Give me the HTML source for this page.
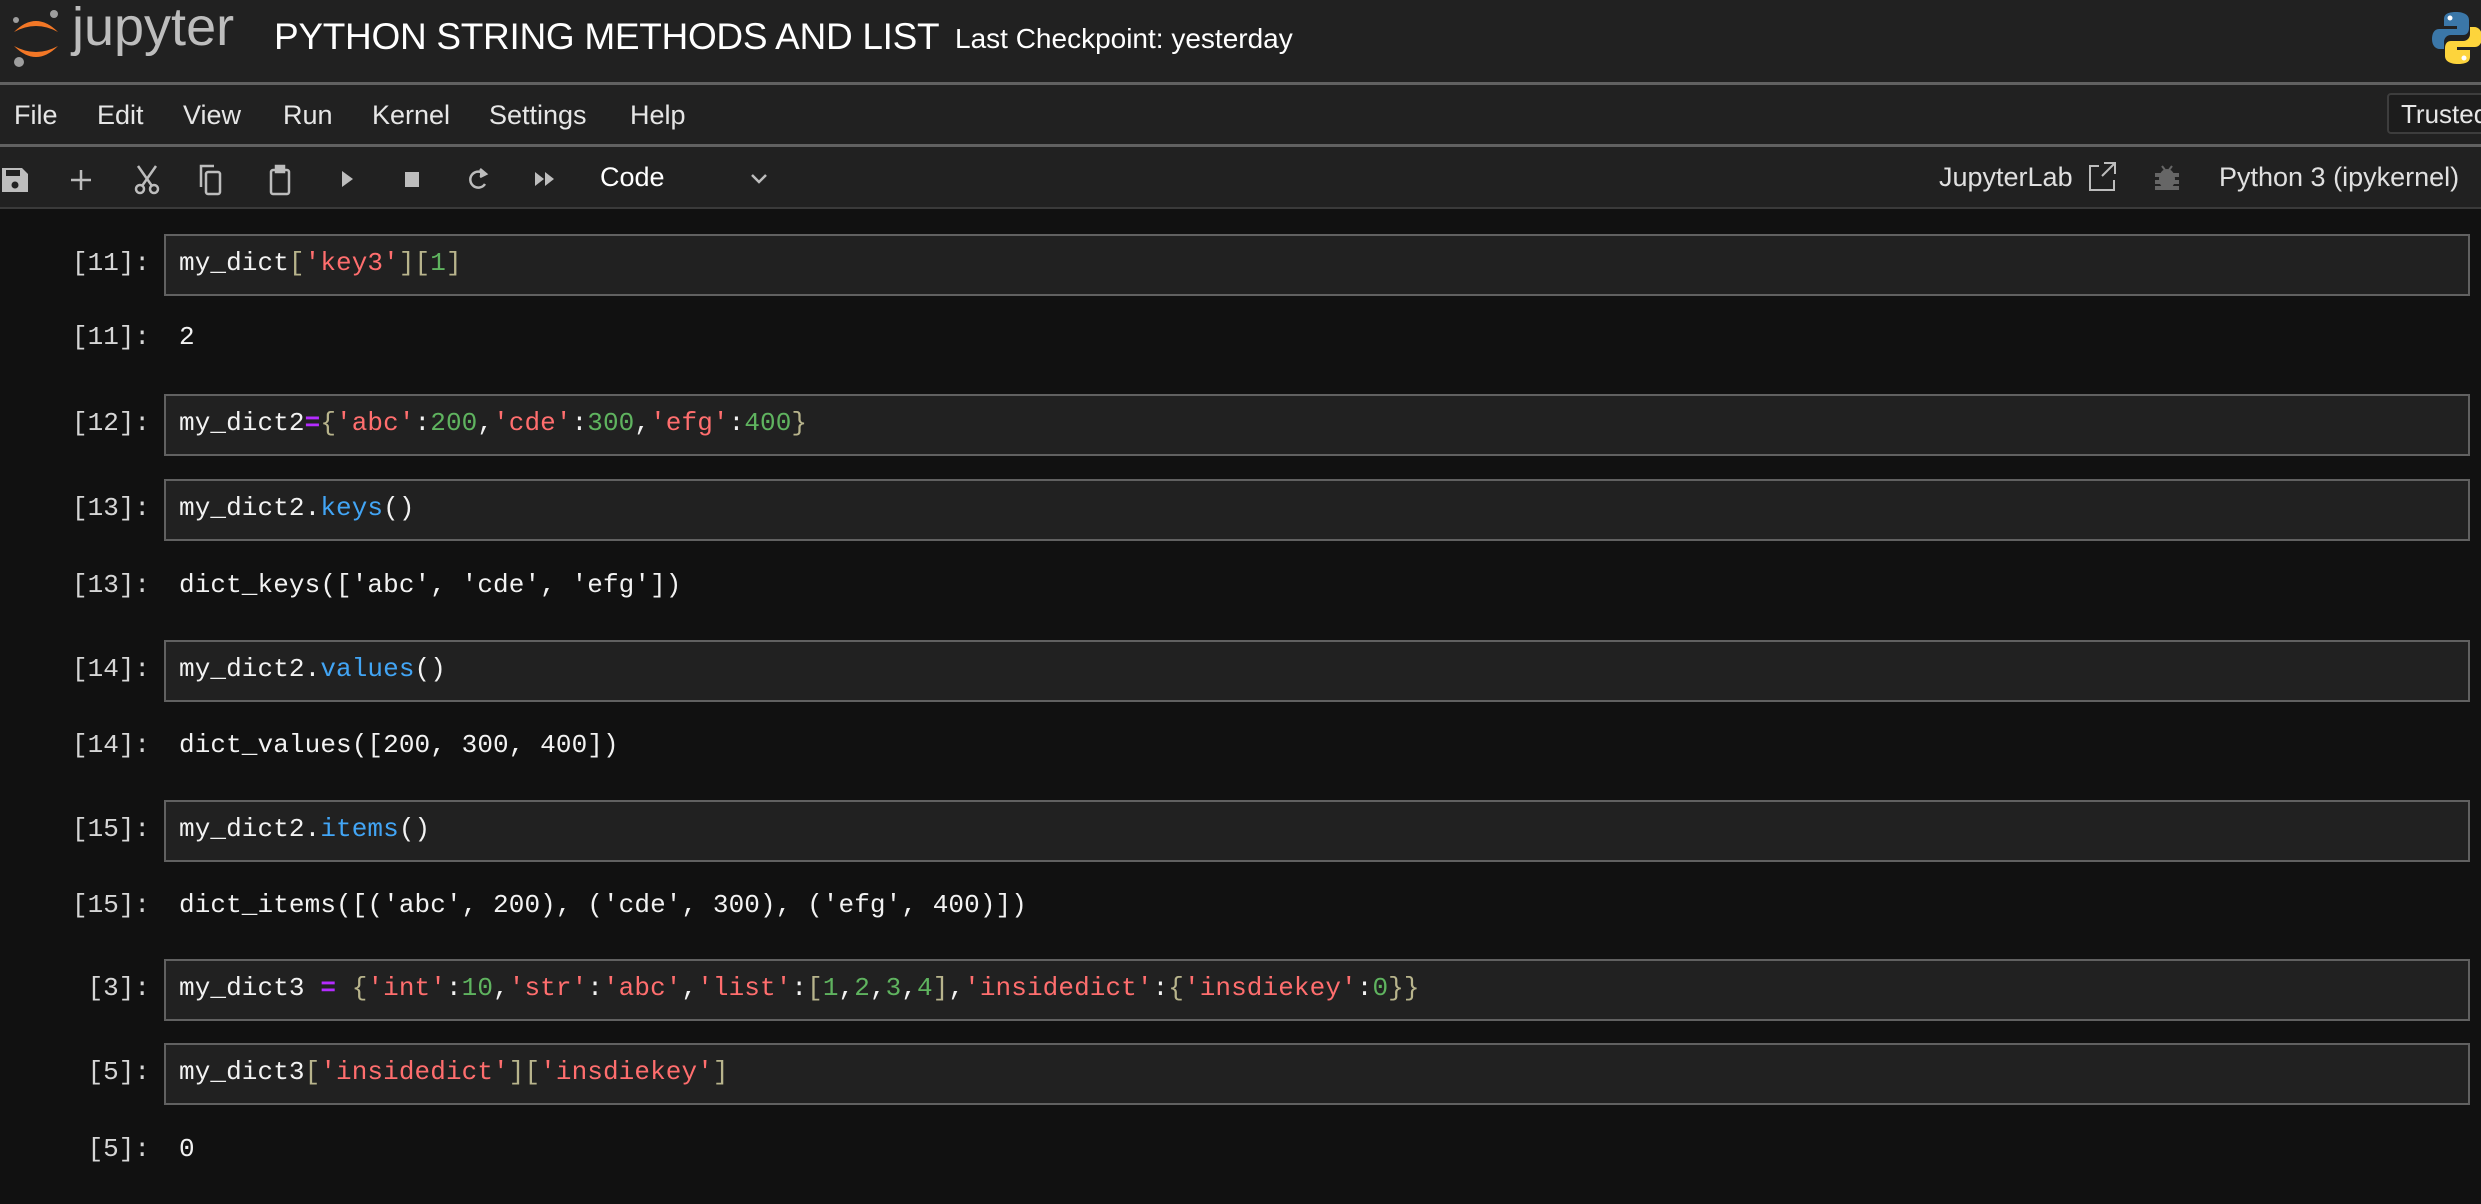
<!DOCTYPE html>
<html><head><meta charset="utf-8"><style>
*{margin:0;padding:0;box-sizing:border-box}
body{width:2481px;height:1204px;background:#111;overflow:hidden;font-family:"Liberation Sans",sans-serif;color:#e8e8e8;position:relative}
.bar{position:absolute;left:0;width:2481px;background:#212121}
.ab{position:absolute;white-space:nowrap}
.menu span{position:absolute;top:100px;font-size:27px;color:#e6e6e6}
.box{position:absolute;left:164px;width:2306px;height:62px;background:#212121;border:2px solid #616161}
.code{position:absolute;font-family:"Liberation Mono",monospace;font-size:26px;white-space:pre;color:#f2f2f2;letter-spacing:0.1px}
.p{position:absolute;font-family:"Liberation Mono",monospace;font-size:26px;color:#d6d6d6;text-align:right;width:100px;left:50px}
.s{color:#ff6e6e}.n{color:#5fb35f}.b{color:#b8b48c}.o{color:#b42cff;font-weight:bold}.m{color:#42a5f5}
</style></head><body>
<div class="bar" style="top:0;height:82px"></div>
<div class="ab" style="top:82px;left:0;width:2481px;height:3px;background:#616161"></div>
<div class="bar" style="top:85px;height:59px"></div>
<div class="ab" style="top:144px;left:0;width:2481px;height:3px;background:#616161"></div>
<div class="bar" style="top:147px;height:60px"></div>
<div class="ab" style="top:207px;left:0;width:2481px;height:2px;background:#3a3a3a"></div>

<svg class="ab" style="left:10px;top:8px" width="52" height="60" viewBox="0 0 52 60">
<path d="M4 24 Q26 2 48 24 Q26 12 4 24Z" fill="#f37726"/>
<path d="M4 38 Q26 60 48 38 Q26 50 4 38Z" fill="#f37726"/>
<circle cx="44" cy="6" r="4" fill="#9e9e9e"/><circle cx="9" cy="54" r="5" fill="#9e9e9e"/><circle cx="6" cy="12" r="3" fill="#9e9e9e"/>
</svg>
<div class="ab" style="left:72px;top:-4px;font-size:54px;color:#bdbdbd">jupyter</div>
<div class="ab" style="left:274px;top:16px;font-size:37px;color:#fff;letter-spacing:-0.3px">PYTHON STRING METHODS AND LIST</div>
<div class="ab" style="left:955px;top:23px;font-size:28px;color:#fff">Last Checkpoint: yesterday</div>
<svg class="ab" style="left:2432px;top:10px" width="50" height="56" viewBox="0 0 50 56">
<path d="M24 2 C12 2 12 7 12 10 V16 H25 V19 H7 C2 19 0 24 0 29 C0 35 3 39 8 39 H12 V32 C12 28 15 25 19 25 H31 C35 25 37 22 37 18 V10 C37 5 32 2 24 2Z" fill="#3b77a8"/>
<path d="M26 54 C38 54 38 49 38 46 V40 H25 V37 H43 C48 37 50 32 50 27 C50 21 47 17 42 17 H38 V24 C38 28 35 31 31 31 H19 C15 31 13 34 13 38 V46 C13 51 18 54 26 54Z" fill="#fdd43c"/>
<circle cx="18" cy="8" r="2.5" fill="#fff"/><circle cx="32" cy="48" r="2.5" fill="#fff"/>
</svg>

<div class="menu">
<span style="left:14px">File</span><span style="left:97px">Edit</span><span style="left:183px">View</span><span style="left:283px">Run</span><span style="left:372px">Kernel</span><span style="left:489px">Settings</span><span style="left:630px">Help</span>
</div>
<div class="ab" style="left:2387px;top:93px;width:110px;height:41px;border:2px solid #3d3d3d;border-radius:4px;background:#1c1c1c;font-size:26px;padding:4px 12px;color:#e6e6e6">Trusted</div>

<svg class="ab" style="left:0;top:160px" width="780" height="40" viewBox="0 0 780 40" fill="none" stroke="#bdbdbd" stroke-width="2.5">
<path d="M2 8 H22 L28 14 V32 H2Z" fill="#bdbdbd" stroke="none"/><rect x="6" y="10" width="14" height="6" fill="#212121" stroke="none"/><circle cx="15" cy="25" r="3.5" fill="#212121" stroke="none"/>
<path d="M81 10 V30 M71 20 H91"/>
<circle cx="140" cy="29" r="4"/><circle cx="154" cy="29" r="4"/><path d="M142 26 L156 6 M152 26 L138 6"/>
<rect x="206" y="12" width="14" height="22" rx="2"/><path d="M201 27 V6 H214"/>
<rect x="271" y="10" width="18" height="24" rx="2"/><rect x="276" y="6" width="8" height="6" fill="#bdbdbd"/>
<path d="M342 11 L353 19 L342 27Z" fill="#bdbdbd" stroke="none"/>
<rect x="405" y="12" width="14" height="15" fill="#bdbdbd" stroke="none"/>
<path d="M484 14 A8 8 0 1 0 485 24"/><path d="M480 9 L486 14 L480 17" fill="#bdbdbd"/>
<path d="M535 12 L544 19 L535 26Z M545 12 L554 19 L545 26Z" fill="#bdbdbd" stroke="none"/>
<path d="M752 15 L759 22 L766 15"/>
</svg>
<div class="ab" style="left:600px;top:162px;font-size:27px;color:#fff">Code</div>

<div class="ab" style="left:1939px;top:162px;font-size:27px;color:#e0e0e0">JupyterLab</div>
<svg class="ab" style="left:2087px;top:160px" width="30" height="32" viewBox="0 0 30 32" fill="none" stroke="#bdbdbd" stroke-width="2"><path d="M12 6 H3 V30 H27 V20 M17 3 H28 V14 M28 3 L15 16"/></svg>
<svg class="ab" style="left:2154px;top:164px" width="26" height="28" viewBox="0 0 26 28" fill="#666"><ellipse cx="13" cy="15" rx="8" ry="10"/><path d="M2 10 H24 V12 H2Z M2 17 H24 V19 H2Z M2 23 H24 V25 H2Z M8 2 L11 6 M18 2 L15 6" stroke="#666" stroke-width="2"/></svg>
<div class="ab" style="left:2219px;top:162px;font-size:27px;color:#e0e0e0">Python 3 (ipykernel)</div>

<div class="box" style="top:234px"></div>
<div class="p" style="top:248px">[11]:</div>
<div class="code" style="left:179px;top:248px">my_dict<span class="b">[</span><span class="s">'key3'</span><span class="b">][</span><span class="n">1</span><span class="b">]</span></div>
<div class="p" style="top:322px">[11]:</div>
<div class="code" style="left:179px;top:322px">2</div>

<div class="box" style="top:394px"></div>
<div class="p" style="top:408px">[12]:</div>
<div class="code" style="left:179px;top:408px">my_dict2<span class="o">=</span><span class="b">{</span><span class="s">'abc'</span>:<span class="n">200</span>,<span class="s">'cde'</span>:<span class="n">300</span>,<span class="s">'efg'</span>:<span class="n">400</span><span class="b">}</span></div>

<div class="box" style="top:479px"></div>
<div class="p" style="top:493px">[13]:</div>
<div class="code" style="left:179px;top:493px">my_dict2.<span class="m">keys</span>()</div>
<div class="p" style="top:570px">[13]:</div>
<div class="code" style="left:179px;top:570px">dict_keys(['abc', 'cde', 'efg'])</div>

<div class="box" style="top:640px"></div>
<div class="p" style="top:654px">[14]:</div>
<div class="code" style="left:179px;top:654px">my_dict2.<span class="m">values</span>()</div>
<div class="p" style="top:730px">[14]:</div>
<div class="code" style="left:179px;top:730px">dict_values([200, 300, 400])</div>

<div class="box" style="top:800px"></div>
<div class="p" style="top:814px">[15]:</div>
<div class="code" style="left:179px;top:814px">my_dict2.<span class="m">items</span>()</div>
<div class="p" style="top:890px">[15]:</div>
<div class="code" style="left:179px;top:890px">dict_items([('abc', 200), ('cde', 300), ('efg', 400)])</div>

<div class="box" style="top:959px"></div>
<div class="p" style="top:973px">[3]:</div>
<div class="code" style="left:179px;top:973px">my_dict3 <span class="o">=</span> <span class="b">{</span><span class="s">'int'</span>:<span class="n">10</span>,<span class="s">'str'</span>:<span class="s">'abc'</span>,<span class="s">'list'</span>:<span class="b">[</span><span class="n">1</span>,<span class="n">2</span>,<span class="n">3</span>,<span class="n">4</span><span class="b">]</span>,<span class="s">'insidedict'</span>:<span class="b">{</span><span class="s">'insdiekey'</span>:<span class="n">0</span><span class="b">}}</span></div>

<div class="box" style="top:1043px"></div>
<div class="p" style="top:1057px">[5]:</div>
<div class="code" style="left:179px;top:1057px">my_dict3<span class="b">[</span><span class="s">'insidedict'</span><span class="b">][</span><span class="s">'insdiekey'</span><span class="b">]</span></div>
<div class="p" style="top:1134px">[5]:</div>
<div class="code" style="left:179px;top:1134px">0</div>
</body></html>
